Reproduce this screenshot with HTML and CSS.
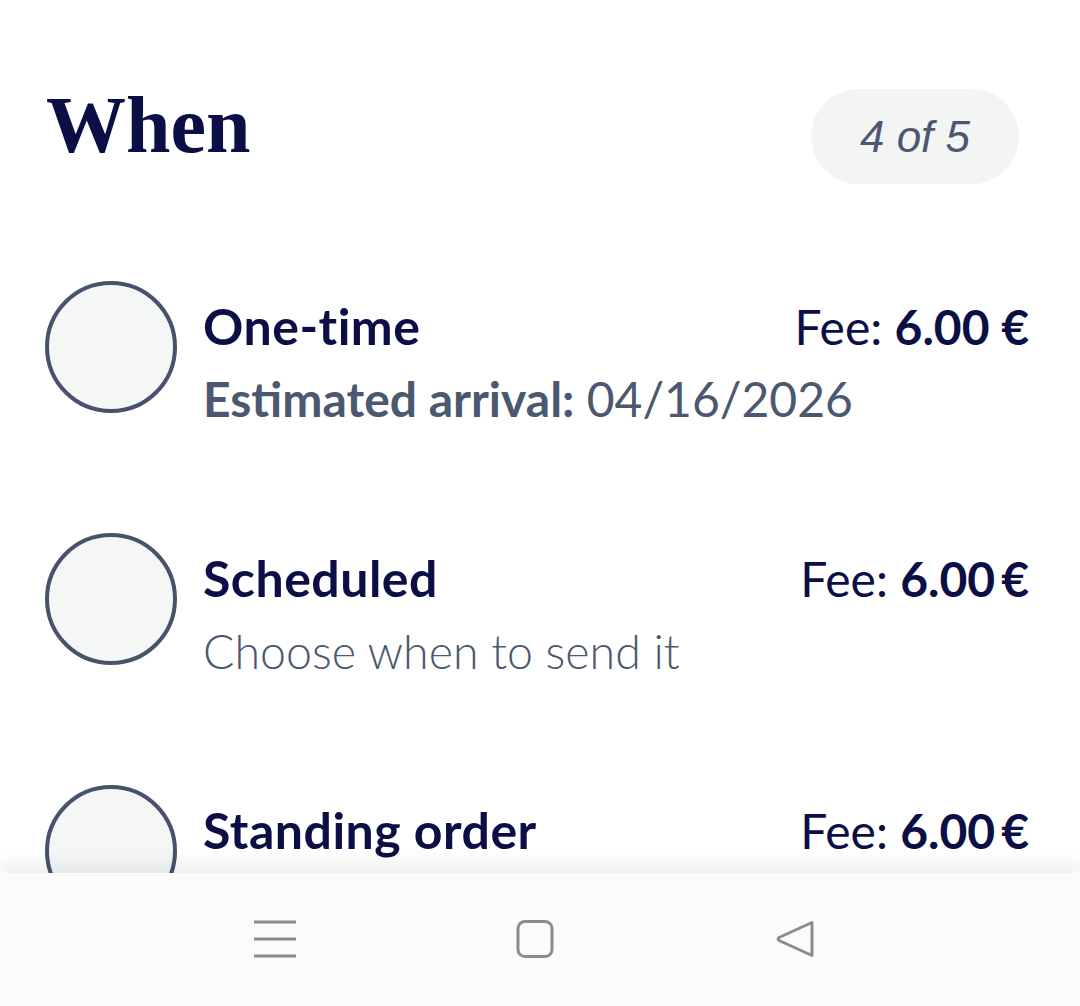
FILE: index.html
```html
<!DOCTYPE html>
<html>
<head>
    <title>When</title>
    <link rel="stylesheet" href="styles.css">
</head>
<body>
    <div class="Screen">
        <div class="Content">
            <div class="Header">
                <h1 class="Title">When</h1>
                <div class="StepPill">4 of 5</div>
            </div>

            <div class="Option">
                <div class="Radio"></div>
                <div class="OptionText">
                    <div class="OptionTop">
                        <span class="OptionName">One-time</span>
                        <span class="Fee">Fee: <b>6.00 €</b></span>
                    </div>
                    <div class="OptionSub"><b>Estimated arrival:</b> 04/16/2026</div>
                </div>
            </div>

            <div class="Option">
                <div class="Radio"></div>
                <div class="OptionText">
                    <div class="OptionTop">
                        <span class="OptionName">Scheduled</span>
                        <span class="Fee">Fee: <b>6.00<span class="Euro">€</span></b></span>
                    </div>
                    <div class="OptionSub Light">Choose when to send it</div>
                </div>
            </div>

            <div class="Option">
                <div class="Radio"></div>
                <div class="OptionText">
                    <div class="OptionTop">
                        <span class="OptionName">Standing order</span>
                        <span class="Fee">Fee: <b>6.00<span class="Euro">€</span></b></span>
                    </div>
                </div>
            </div>
        </div>

        <div class="NavBar">
            <svg class="NavIcon" width="48" height="48" viewBox="0 0 48 48">
                <path d="M3 7H45M3 24H45M3 41H45" stroke="#8c8c8c" stroke-width="3.2" fill="none"/>
            </svg>
            <svg class="NavIcon" width="48" height="48" viewBox="0 0 48 48">
                <rect x="7" y="6.5" width="34" height="35" rx="7" stroke="#8c8c8c" stroke-width="3" fill="none"/>
            </svg>
            <svg class="NavIcon" width="48" height="48" viewBox="0 0 48 48">
                <path d="M41 7.5V40.5L8 25.5Q6.5 24 8 22.5Z" stroke="#8c8c8c" stroke-width="3" stroke-linejoin="round" fill="none"/>
            </svg>
        </div>
    </div>
</body>
</html>
```

FILE: styles.css
```css
body {
    margin: 0;
    font-family: Lato, "Open Sans", sans-serif;
    background: #ffffff;
}

.Screen {
    display: flex;
    flex-direction: column;
    width: 1080px;
    height: 1006px;
    overflow: hidden;
}

.Content {
    flex: 1;
    overflow: hidden;
    padding: 0 51px 0 45px;
}

.Header {
    display: flex;
    justify-content: space-between;
    align-items: flex-start;
    padding-top: 85px;
    padding-right: 10px;
    margin-bottom: 97px;
}

.Title {
    margin: 0;
    padding-left: 1px;
    font-family: "Liberation Serif", serif;
    font-weight: 700;
    font-size: 80px;
    line-height: 80px;
    color: #0b0f45;
}

.StepPill {
    display: flex;
    align-items: center;
    justify-content: center;
    margin-top: 4px;
    width: 208px;
    height: 95px;
    border-radius: 48px;
    background: #f3f5f5;
    font-family: "Liberation Sans", sans-serif;
    font-style: italic;
    font-size: 44px;
    color: #4d5870;
}

.Option {
    display: flex;
    align-items: flex-start;
    gap: 26px;
    height: 132px;
    margin-bottom: 120px;
}

.Radio {
    flex: none;
    width: 124px;
    height: 124px;
    border: 4px solid #46536b;
    border-radius: 50%;
    background: #f5f7f7;
}

.OptionText {
    flex: 1;
    padding-top: 9px;
}

.OptionTop {
    display: flex;
    justify-content: space-between;
    align-items: baseline;
    line-height: 72px;
}

.OptionName {
    font-size: 50px;
    font-weight: 700;
    letter-spacing: 0.5px;
    color: #0b0f45;
}

.Fee {
    font-size: 48px;
    font-weight: 400;
    color: #0b0f45;
}

.Fee b {
    font-weight: 700;
}

.Euro {
    margin-left: 6px;
}

.OptionSub {
    font-size: 48px;
    line-height: 72px;
    color: #4b586f;
}

.OptionSub b {
    font-weight: 700;
}

.Light {
    font-size: 46.5px;
    font-weight: 300;
}

.NavBar {
    flex: none;
    position: relative;
    display: flex;
    justify-content: center;
    align-items: flex-start;
    gap: 212px;
    height: 133px;
    padding-top: 42px;
    padding-right: 10px;
    box-sizing: border-box;
    background: #fbfbfb;
    box-shadow: 0 -10px 18px rgba(20, 30, 50, 0.07);
}
```
